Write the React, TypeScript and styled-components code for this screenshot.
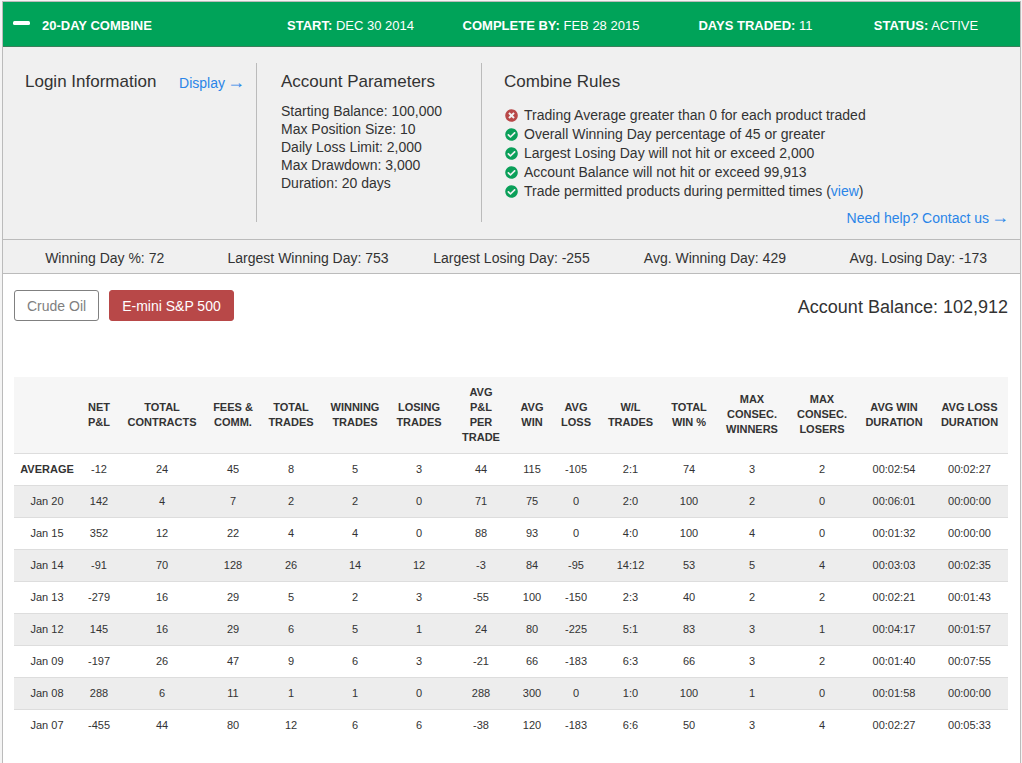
import React from "react";
import styled, { createGlobalStyle } from "styled-components";
import { FaCheckCircle, FaTimesCircle } from "react-icons/fa";

const GlobalStyle = createGlobalStyle`
  *, *::before, *::after { box-sizing: border-box; }
  body {
    margin: 0;
    background: #f4f4f4;
    color: #333;
    font-family: "Liberation Sans", Arial, Helvetica, sans-serif;
    font-size: 14px;
  }
`;

const Card = styled.main`
  min-height: calc(100vh - 1px);
  margin: 1px 1px 0 2px;
  border: 1px solid #bbb;
  border-bottom: 0;
  background: #fff;
`;

const TitleBar = styled.header`
  display: grid;
  grid-template-columns: 247fr 201fr 200fr 209fr 132fr;
  align-items: center;
  height: 45px;
  padding: 2px 28px 0 0;
  border-bottom: 1px solid #3b7f5b;
  background: #00a359;
  color: #fff;
  font-size: 13px;
  text-transform: uppercase;
`;

const CollapseButton = styled.button`
  display: flex;
  align-items: center;
  gap: 12px;
  padding: 0 0 0 10px;
  border: 0;
  background: none;
  color: inherit;
  font: inherit;
  font-weight: bold;
  text-transform: inherit;
  cursor: pointer;
`;

const Fact = styled.span`
  text-align: center;
  white-space: nowrap;
`;

const Overview = styled.div`
  display: grid;
  grid-template-columns: 254fr 225fr 538fr;
  padding: 16px 0 17px;
  border-bottom: 1px solid #bbb;
  background: #f0f0f0;
`;

const Section = styled.section`
  height: 159px;
  padding: 9px 11px 0 22px;
  border-right: 1px solid #bbb;

  &:nth-child(2) {
    padding-left: 24px;
  }

  &:last-child {
    border-right: 0;
  }
`;

const SectionHead = styled.div`
  display: flex;
  justify-content: space-between;
  align-items: flex-end;
  line-height: 18px;
`;

const Heading = styled.h2`
  margin: 0;
  font-size: 17px;
  font-weight: normal;
  line-height: 20px;
`;

const Link = styled.a`
  color: #2a85e8;
  text-decoration: none;
`;

const Arrow = styled.span`
  margin-left: 2px;
  font-size: 18px;
  line-height: 1;
`;

const Parameters = styled.ul`
  margin: 10px 0 0;
  padding: 0;
  list-style: none;
  line-height: 18px;
`;

const Rules = styled.ul`
  margin: 14px 0 0;
  padding: 0;
  list-style: none;
`;

const Rule = styled.li`
  display: flex;
  align-items: center;
  gap: 6px;
  padding-left: 1px;
  line-height: 19px;
`;

const Help = styled.div`
  margin-top: 7px;
  line-height: 18px;
  text-align: right;
`;

const Stats = styled.div`
  display: grid;
  grid-template-columns: repeat(5, 1fr);
  align-items: center;
  height: 34px;
  padding-top: 2px;
  border-bottom: 1px solid #bbb;
  background: #f0f0f0;
  text-align: center;
`;

const Results = styled.section`
  padding: 16px 12px 24px 11px;
`;

const Toolbar = styled.div`
  display: flex;
  align-items: center;
  gap: 10px;
  margin-bottom: 56px;
`;

const ProductButton = styled.button<{ $active?: boolean }>`
  height: 31px;
  padding: 0 12px;
  border: 1px solid ${(p) => (p.$active ? "#b84848" : "#808080")};
  border-radius: 3px;
  background: ${(p) => (p.$active ? "#b84848" : "#fff")};
  color: ${(p) => (p.$active ? "#fff" : "#808080")};
  font: inherit;
  cursor: pointer;
`;

const Balance = styled.div`
  margin-left: auto;
  padding-top: 4px;
  font-size: 18px;
`;

const Table = styled.table`
  width: 100%;
  border-collapse: collapse;
  table-layout: fixed;
  font-size: 11px;
  line-height: 15px;
  text-align: center;
`;

const Col = styled.col<{ $width: number }>`
  width: ${(p) => p.$width}px;
`;

const HeadRow = styled.tr`
  height: 76px;
  background: #f6f6f6;
`;

const HeadCell = styled.th`
  padding: 0;
  white-space: pre-line;
`;

const Row = styled.tr`
  height: 32px;
  border-top: 1px solid #ddd;

  &:nth-child(even) {
    background: #ededed;
  }
`;

const RowLabel = styled.th<{ $strong?: boolean }>`
  padding: 0;
  font-weight: ${(p) => (p.$strong ? "bold" : "normal")};
`;

const Cell = styled.td`
  padding: 0;
`;

const facts = [
  ["Start:", "Dec 30 2014"],
  ["Complete by:", "Feb 28 2015"],
  ["Days traded:", "11"],
  ["Status:", "Active"],
];

const parameters = [
  "Starting Balance: 100,000",
  "Max Position Size: 10",
  "Daily Loss Limit: 2,000",
  "Max Drawdown: 3,000",
  "Duration: 20 days",
];

const rules: { met: boolean; text: React.ReactNode }[] = [
  { met: false, text: "Trading Average greater than 0 for each product traded" },
  { met: true, text: "Overall Winning Day percentage of 45 or greater" },
  { met: true, text: "Largest Losing Day will not hit or exceed 2,000" },
  { met: true, text: "Account Balance will not hit or exceed 99,913" },
  {
    met: true,
    text: (
      <>
        Trade permitted products during permitted times (<Link href="#products">view</Link>)
      </>
    ),
  },
];

const stats = [
  "Winning Day %: 72",
  "Largest Winning Day: 753",
  "Largest Losing Day: -255",
  "Avg. Winning Day: 429",
  "Avg. Losing Day: -173",
];

const columns: [string, number][] = [
  ["", 66],
  ["NET\nP&L", 38],
  ["TOTAL\nCONTRACTS", 88],
  ["FEES &\nCOMM.", 54],
  ["TOTAL\nTRADES", 62],
  ["WINNING\nTRADES", 66],
  ["LOSING\nTRADES", 62],
  ["AVG\nP&L\nPER\nTRADE", 62],
  ["AVG\nWIN", 40],
  ["AVG\nLOSS", 48],
  ["W/L\nTRADES", 61],
  ["TOTAL\nWIN %", 56],
  ["MAX\nCONSEC.\nWINNERS", 70],
  ["MAX\nCONSEC.\nLOSERS", 70],
  ["AVG WIN\nDURATION", 74],
  ["AVG LOSS\nDURATION", 77],
];

const rows = [
  ["AVERAGE", "-12", "24", "45", "8", "5", "3", "44", "115", "-105", "2:1", "74", "3", "2", "00:02:54", "00:02:27"],
  ["Jan 20", "142", "4", "7", "2", "2", "0", "71", "75", "0", "2:0", "100", "2", "0", "00:06:01", "00:00:00"],
  ["Jan 15", "352", "12", "22", "4", "4", "0", "88", "93", "0", "4:0", "100", "4", "0", "00:01:32", "00:00:00"],
  ["Jan 14", "-91", "70", "128", "26", "14", "12", "-3", "84", "-95", "14:12", "53", "5", "4", "00:03:03", "00:02:35"],
  ["Jan 13", "-279", "16", "29", "5", "2", "3", "-55", "100", "-150", "2:3", "40", "2", "2", "00:02:21", "00:01:43"],
  ["Jan 12", "145", "16", "29", "6", "5", "1", "24", "80", "-225", "5:1", "83", "3", "1", "00:04:17", "00:01:57"],
  ["Jan 09", "-197", "26", "47", "9", "6", "3", "-21", "66", "-183", "6:3", "66", "3", "2", "00:01:40", "00:07:55"],
  ["Jan 08", "288", "6", "11", "1", "1", "0", "288", "300", "0", "1:0", "100", "1", "0", "00:01:58", "00:00:00"],
  ["Jan 07", "-455", "44", "80", "12", "6", "6", "-38", "120", "-183", "6:6", "50", "3", "4", "00:02:27", "00:05:33"],
];

export default function App() {
  return (
    <>
      <GlobalStyle />
      <Card>
        <TitleBar>
          <CollapseButton type="button" aria-expanded="true">
            <svg width="17" height="8" viewBox="0 0 17 8" aria-hidden="true">
              <rect x="0" y="0" width="17" height="4" rx="1.5" fill="currentColor" />
            </svg>
            20-Day Combine
          </CollapseButton>
          {facts.map(([name, value]) => (
            <Fact key={name}>
              <b>{name}</b> {value}
            </Fact>
          ))}
        </TitleBar>

        <Overview>
          <Section>
            <SectionHead>
              <Heading>Login Information</Heading>
              <Link href="#login">
                Display<Arrow>→</Arrow>
              </Link>
            </SectionHead>
          </Section>
          <Section>
            <Heading>Account Parameters</Heading>
            <Parameters>
              {parameters.map((text) => (
                <li key={text}>{text}</li>
              ))}
            </Parameters>
          </Section>
          <Section>
            <Heading>Combine Rules</Heading>
            <Rules>
              {rules.map(({ met, text }, i) => (
                <Rule key={i}>
                  {met ? (
                    <FaCheckCircle size={13} color="#0a9f59" aria-label="Met" />
                  ) : (
                    <FaTimesCircle size={13} color="#b84848" aria-label="Not met" />
                  )}
                  <span>{text}</span>
                </Rule>
              ))}
            </Rules>
            <Help>
              <Link href="#contact">
                Need help? Contact us<Arrow>→</Arrow>
              </Link>
            </Help>
          </Section>
        </Overview>

        <Stats>
          {stats.map((text) => (
            <span key={text}>{text}</span>
          ))}
        </Stats>

        <Results>
          <Toolbar>
            <ProductButton type="button">Crude Oil</ProductButton>
            <ProductButton type="button" $active>
              E-mini S&amp;P 500
            </ProductButton>
            <Balance>Account Balance: 102,912</Balance>
          </Toolbar>

          <Table>
            <colgroup>
              {columns.map(([name, width]) => (
                <Col key={name} $width={width} />
              ))}
            </colgroup>
            <thead>
              <HeadRow>
                {columns.map(([name]) =>
                  name ? (
                    <HeadCell key={name} scope="col">
                      {name}
                    </HeadCell>
                  ) : (
                    <Cell key="corner" />
                  )
                )}
              </HeadRow>
            </thead>
            <tbody>
              {rows.map(([label, ...values]) => (
                <Row key={label}>
                  <RowLabel scope="row" $strong={label === "AVERAGE"}>
                    {label}
                  </RowLabel>
                  {values.map((value, i) => (
                    <Cell key={i}>{value}</Cell>
                  ))}
                </Row>
              ))}
            </tbody>
          </Table>
        </Results>
      </Card>
    </>
  );
}
